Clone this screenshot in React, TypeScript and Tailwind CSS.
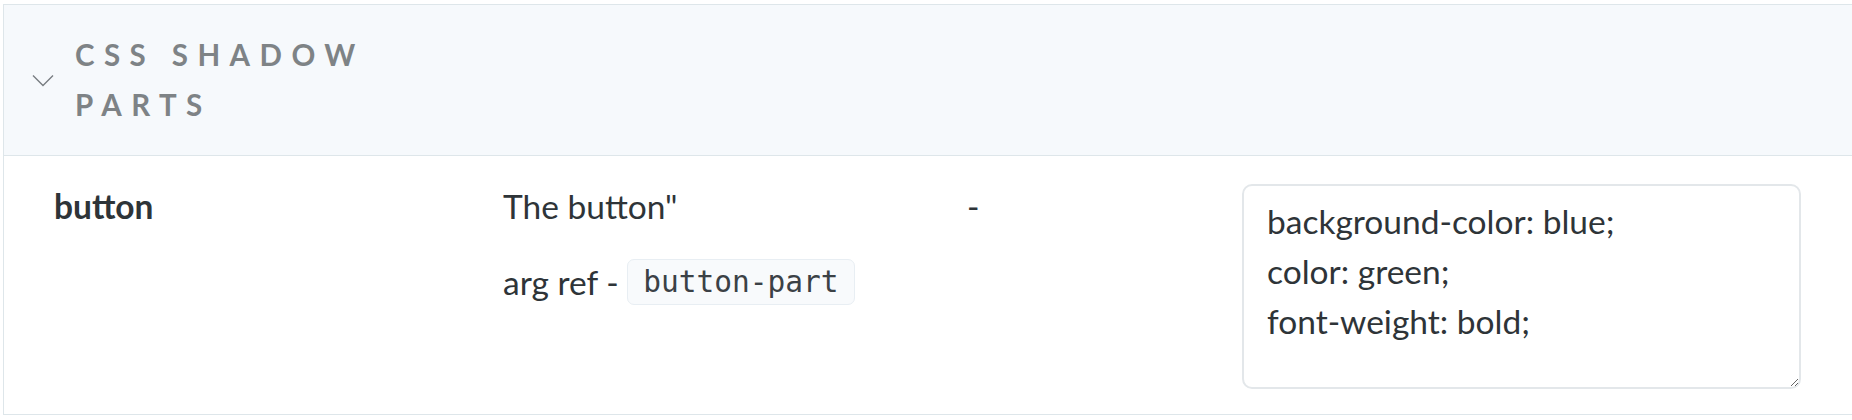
import React from 'react';

const sans = "font-['Lato','Nunito_Sans','Open_Sans',sans-serif]";

function Chevron() {
  return (
    <svg width="22" height="13" viewBox="0 0 22 13" fill="none" className="shrink-0">
      <polyline points="1,1.5 11,11.5 21,1.5" stroke="#787d81" strokeWidth="1.4" />
    </svg>
  );
}

export default function App() {
  return (
    <div className={`min-h-screen bg-white pt-[4px] pl-[3px] text-[#2e3438] ${sans}`}>
      <div className="border-l border-t border-[#dee6ea]">
        {/* section header */}
        <div className="flex items-center h-[151px] bg-[#f6f9fc] border-b border-[#dee6ea] pl-[28px]">
          <Chevron />
          <div className="ml-[21px] w-[330px] text-[29.5px] leading-[50px] font-bold tracking-[0.32em] text-[#7e8386] uppercase">
            CSS Shadow Parts
          </div>
        </div>

        {/* row */}
        <div className="grid grid-cols-[462px_464px_274px_1fr] h-[259px] border-b border-[#dee6ea] text-[33.5px] leading-[50px]">
          <div className="pl-[50px] pt-[25px] font-bold">button</div>
          <div className="pl-[37px] pt-[25px]">
            <div>The button"</div>
            <div className="mt-[26px] flex items-center h-[50px]">
              <span>arg ref -&nbsp;</span>
              <code className="flex items-center h-[46px] px-[15px] rounded-[7px] border border-[#e8eef3] bg-[#f8fafc] font-['DejaVu_Sans_Mono',monospace] text-[29.5px] text-[#3b4146]">
                button-part
              </code>
            </div>
          </div>
          <div className="pl-[37px] pt-[25px]">-</div>
          <div className="pl-[38px] pr-[51px] pt-[28px]">
            <textarea
              className={`block w-full h-[205px] rounded-[10px] border-2 border-[#e3e7ea] bg-white pl-[23px] pt-[10px] text-[33.5px] leading-[50px] text-[#2e3438] outline-none ${sans}`}
              defaultValue={'background-color: blue;\ncolor: green;\nfont-weight: bold;'}
            />
          </div>
        </div>
      </div>
    </div>
  );
}
